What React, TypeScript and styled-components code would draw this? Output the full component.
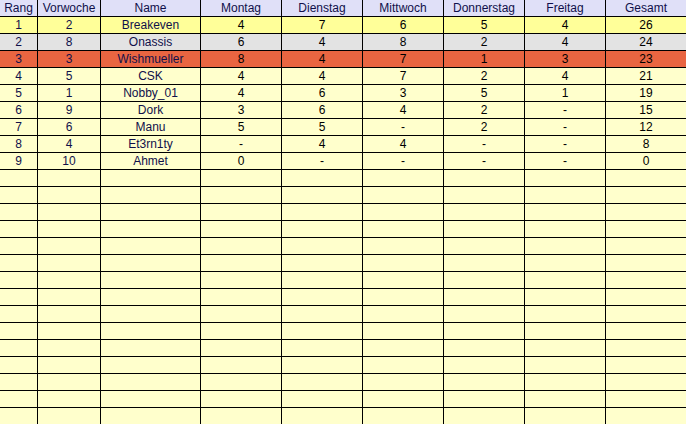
import React from "react";
import styled, { createGlobalStyle } from "styled-components";

const Global = createGlobalStyle`
  html, body { margin: 0; padding: 0; background: #ffffcc; overflow: hidden; }
  body { font-family: "Liberation Sans", Arial, sans-serif; }
`;

const COLS = "37px 62px 99px 80px 80px 80px 80px 80px 80px";

const Sheet = styled.div`
  width: 686px;
  height: 424px;
  overflow: hidden;
  display: flex;
  flex-direction: column;
  gap: 1px;
  background: #000;
`;

const Row = styled.div<{ $bg: string }>`
  display: grid;
  grid-template-columns: ${COLS};
  column-gap: 1px;
  height: 16px;
  flex: none;
  background: #000;
  & > div {
    background: ${(p) => p.$bg};
  }
`;

const Cell = styled.div<{ $navy?: boolean }>`
  height: 16px;
  line-height: 16px;
  font-size: 12px;
  text-align: center;
  white-space: nowrap;
  overflow: hidden;
  color: ${(p) => (p.$navy ? "#10104a" : "#000")};
`;

const HEAD = ["Rang", "Vorwoche", "Name", "Montag", "Dienstag", "Mittwoch", "Donnerstag", "Freitag", "Gesamt"];

const DATA: string[][] = [
  ["1", "2", "Breakeven", "4", "7", "6", "5", "4", "26"],
  ["2", "8", "Onassis", "6", "4", "8", "2", "4", "24"],
  ["3", "3", "Wishmueller", "8", "4", "7", "1", "3", "23"],
  ["4", "5", "CSK", "4", "4", "7", "2", "4", "21"],
  ["5", "1", "Nobby_01", "4", "6", "3", "5", "1", "19"],
  ["6", "9", "Dork", "3", "6", "4", "2", "-", "15"],
  ["7", "6", "Manu", "5", "5", "-", "2", "-", "12"],
  ["8", "4", "Et3rn1ty", "-", "4", "4", "-", "-", "8"],
  ["9", "10", "Ahmet", "0", "-", "-", "-", "-", "0"],
];

const rowBg = (i: number) => (i === 0 ? "#ffff99" : i === 1 ? "#e3e3e3" : i === 2 ? "#e96541" : "#ffffcc");

export default function App() {
  const empties = Array.from({ length: 16 });
  return (
    <>
      <Global />
      <Sheet>
        <Row $bg="#e0e0f8">
          {HEAD.map((h) => (
            <Cell key={h} $navy>
              {h}
            </Cell>
          ))}
        </Row>
        {DATA.map((r, i) => (
          <Row key={i} $bg={rowBg(i)}>
            {r.map((c, j) => (
              <Cell key={j} $navy={j < 3}>
                {c}
              </Cell>
            ))}
          </Row>
        ))}
        {empties.map((_, i) => (
          <Row key={"e" + i} $bg="#ffffcc">
            {HEAD.map((h) => (
              <Cell key={h} />
            ))}
          </Row>
        ))}
      </Sheet>
    </>
  );
}
